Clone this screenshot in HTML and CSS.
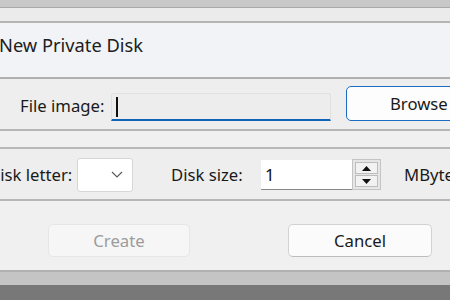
FILE: index.html
```html
<!DOCTYPE html>
<html>
<head>
<meta charset="utf-8">
<link rel="stylesheet" href="styles.css">
</head>
<body>
<div class="win">
  <div class="band-top"></div>
  <div class="strip"></div>
  <div class="title"><span class="title-text">New Private Disk</span></div>
  <div class="row row-file">
    <span class="label label-file">File image:</span>
    <div class="file-input"><span class="caret"></span></div>
    <button class="btn btn-browse">Browse</button>
  </div>
  <div class="gap"></div>
  <div class="row row-disk">
    <span class="label label-letter">Disk letter:</span>
    <div class="combo">
      <svg class="chev" width="12" height="7" viewBox="0 0 12 7"><path d="M1 1 L6 6 L11 1" fill="none" stroke="#5a5a5a" stroke-width="1.2"/></svg>
    </div>
    <span class="label label-size">Disk size:</span>
    <div class="spin-input"><span class="spin-val">1</span></div>
    <div class="spin">
      <div class="spin-btn"><svg width="9" height="5" viewBox="0 0 9 5"><path d="M4.5 0 L9 5 L0 5 Z" fill="#111"/></svg></div>
      <div class="spin-btn"><svg width="9" height="5" viewBox="0 0 9 5"><path d="M0 0 L9 0 L4.5 5 Z" fill="#111"/></svg></div>
    </div>
    <span class="label label-mb">MByte</span>
  </div>
  <div class="row row-buttons">
    <button class="btn btn-create">Create</button>
    <button class="btn btn-cancel">Cancel</button>
  </div>
  <div class="band-b1"></div>
  <div class="band-b2"></div>
</div>
</body>
</html>
```

FILE: styles.css
```css
html, body {
  margin: 0;
  padding: 0;
  width: 450px;
  height: 300px;
  overflow: hidden;
  background: #7a7a7a;
  font-family: "Noto Sans", "DejaVu Sans", sans-serif;
}
.win {
  display: flex;
  flex-direction: column;
  width: 450px;
}
.win > div {
  flex-shrink: 0;
  box-sizing: border-box;
}
.row > * {
  flex-shrink: 0;
}
.band-top {
  height: 8px;
  background: #c8c8c8;
  border-bottom: 1px solid #a9a9a9;
}
.strip {
  height: 15px;
  background: #ebebeb;
  border-bottom: 2px solid #b4b4b4;
}
.title {
  height: 56px;
  background: #f1f3f6;
  border-bottom: 2px solid #b0b0b0;
  display: flex;
  align-items: flex-start;
  padding-top: 9px;
}
.title-text {
  margin-left: -1px;
  font-size: 18.3px;
  line-height: 26px;
  color: #202020;
}
.row {
  display: flex;
  background: #eeeeee;
}
.label {
  font-size: 16.7px;
  color: #1a1a1a;
  white-space: nowrap;
}
.row-file {
  height: 52px;
  align-items: flex-end;
  padding-bottom: 8px;
  border-bottom: 2px solid #b6b6b6;
}
.label-file {
  margin-left: 20px;
  margin-bottom: 4px;
  width: 91px;
}
.file-input {
  width: 220px;
  height: 28px;
  background: #ededed;
  border: 1px solid #e0e0e0;
  border-bottom: 2px solid #0f63b8;
  border-radius: 3px 3px 0 0;
  box-sizing: border-box;
  display: flex;
  align-items: center;
}
.caret {
  display: block;
  width: 1.5px;
  height: 20px;
  margin-left: 4px;
  background: #111;
}
.btn {
  font-family: inherit;
  font-size: 16.7px;
  padding: 0;
  box-sizing: border-box;
  border-radius: 5px;
}
.btn-browse {
  margin-left: 15px;
  width: 120px;
  height: 35px;
  background: #fdfdfd;
  border: 1.5px solid #1a6cc4;
  color: #1a1a1a;
  text-align: left;
  padding-left: 43px;
}
.gap {
  height: 18px;
  background: #f0f0f0;
  border-bottom: 2px solid #b8b8b8;
}
.row-disk {
  height: 52px;
  align-items: center;
  border-bottom: 2px solid #b6b6b6;
}
.label-letter {
  margin-left: -12px;
  width: 89px;
}
.combo {
  width: 56px;
  height: 34px;
  box-sizing: border-box;
  background: #ffffff;
  border: 1px solid #d6d6d6;
  border-radius: 3px;
  display: flex;
  align-items: center;
  justify-content: flex-end;
  padding-right: 9px;
  margin-top: 1px;
}
.label-size {
  margin-left: 38px;
  width: 90px;
}
.spin-input {
  width: 91px;
  height: 30px;
  box-sizing: border-box;
  background: #ffffff;
  border-bottom: 1.5px solid #8a8a8a;
  display: flex;
  align-items: center;
  margin-top: 2px;
}
.spin-val {
  font-size: 16.7px;
  margin-left: 4px;
  color: #111;
}
.spin {
  width: 29px;
  height: 31px;
  box-sizing: border-box;
  border: 1px solid #c4c4c4;
  background: #e6e6e6;
  display: flex;
  flex-direction: column;
  padding: 2px;
  gap: 1px;
  margin-top: 1px;
}
.spin-btn {
  flex: 1;
  background: #f2f2f2;
  border: 1px solid #bdbdbd;
  display: flex;
  align-items: center;
  justify-content: center;
}
.label-mb {
  margin-left: 23px;
}
.row-buttons {
  height: 71px;
  background: #f0f0f0;
  border-bottom: 2px solid #b0b0b0;
  align-items: flex-start;
  padding-top: 23px;
}
.btn-create {
  margin-left: 48px;
  width: 142px;
  height: 33px;
  background: #f6f6f6;
  border: 1px solid #e6e6e6;
  color: #9c9c9c;
}
.btn-cancel {
  margin-left: 98px;
  width: 144px;
  height: 33px;
  background: #fbfbfb;
  border: 1px solid #d2d2d2;
  border-bottom-color: #bcbcbc;
  color: #1a1a1a;
}
.band-b1 {
  height: 13px;
  background: #c4c4c4;
}
.band-b2 {
  height: 15px;
  background: #787878;
}
```
